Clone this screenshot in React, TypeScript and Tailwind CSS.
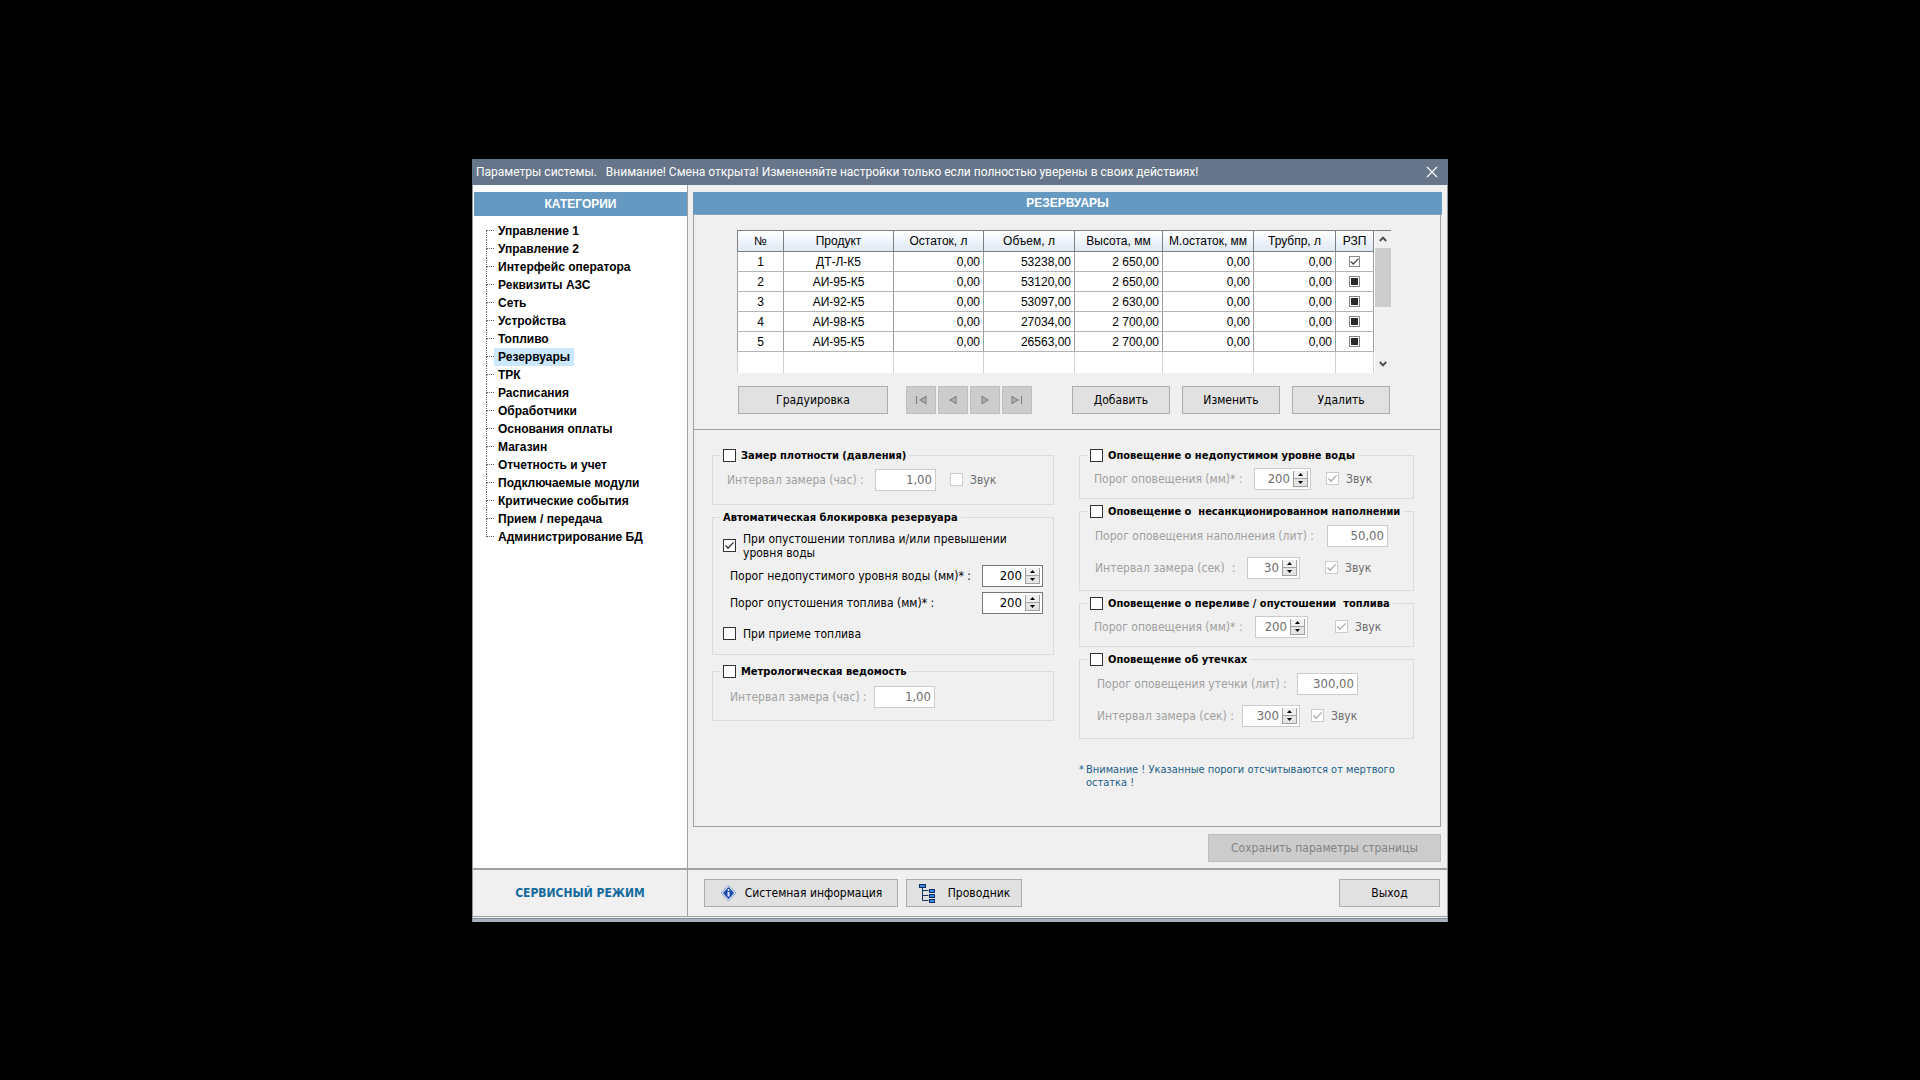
import React, { useState } from 'react';

const tahoma = "font-['DejaVu_Sans_Condensed','DejaVu_Sans',sans-serif]";
const arial = "font-['Liberation_Sans',Arial,sans-serif]";
const segoe = "font-['Roboto','Noto_Sans',sans-serif]";

const categories = [
  'Управление 1',
  'Управление 2',
  'Интерфейс оператора',
  'Реквизиты АЗС',
  'Сеть',
  'Устройства',
  'Топливо',
  'Резервуары',
  'ТРК',
  'Расписания',
  'Обработчики',
  'Основания оплаты',
  'Магазин',
  'Отчетность и учет',
  'Подключаемые модули',
  'Критические события',
  'Прием / передача',
  'Администрирование БД',
];

const columns = ['№', 'Продукт', 'Остаток, л', 'Объем, л', 'Высота, мм', 'М.остаток, мм', 'Трубпр, л', 'РЗП'];

const tanks = [
  { id: 1, product: 'ДТ-Л-К5', rest: '0,00', volume: '53238,00', height: '2 650,00', dead: '0,00', pipe: '0,00', rzp: true },
  { id: 2, product: 'АИ-95-К5', rest: '0,00', volume: '53120,00', height: '2 650,00', dead: '0,00', pipe: '0,00', rzp: false },
  { id: 3, product: 'АИ-92-К5', rest: '0,00', volume: '53097,00', height: '2 630,00', dead: '0,00', pipe: '0,00', rzp: false },
  { id: 4, product: 'АИ-98-К5', rest: '0,00', volume: '27034,00', height: '2 700,00', dead: '0,00', pipe: '0,00', rzp: false },
  { id: 5, product: 'АИ-95-К5', rest: '0,00', volume: '26563,00', height: '2 700,00', dead: '0,00', pipe: '0,00', rzp: false },
];

interface CheckProps {
  id: string;
  checked?: boolean;
  disabled?: boolean;
}

function Check({ id, checked = false, disabled = false }: CheckProps) {
  return (
    <span className="relative block size-[13px] shrink-0">
      <input
        id={id}
        type="checkbox"
        defaultChecked={checked}
        disabled={disabled}
        className="peer block size-[13px] appearance-none border border-[#333] bg-white disabled:border-[#ccc]"
      />
      <svg
        viewBox="0 0 13 13"
        className="pointer-events-none absolute inset-0 hidden size-[13px] text-[#333] peer-checked:block peer-disabled:text-[#aaa]"
        fill="none"
        stroke="currentColor"
        strokeWidth={1.3}
      >
        <path d="M2.5 6.5 5 9.2 10.6 3.4" />
      </svg>
    </span>
  );
}

function GridCheck({ id, checked, label }: { id: string; checked: boolean; label: string }) {
  return (
    <span className="relative mx-auto block size-[11px]">
      <input
        id={id}
        type="checkbox"
        aria-label={label}
        defaultChecked={checked}
        className="peer block size-[11px] appearance-none border border-[#888] bg-white"
      />
      <svg viewBox="0 0 11 11" className="pointer-events-none absolute inset-0 size-[11px] peer-checked:hidden">
        <rect x="2" y="2" width="7" height="7" fill="#2b2b2b" />
      </svg>
      <svg viewBox="0 0 11 11" className="pointer-events-none absolute inset-0 hidden size-[11px] peer-checked:block" fill="none" stroke="#444" strokeWidth={1.3}>
        <path d="M1.8 5.4 4.2 8 9.4 2.6" />
      </svg>
    </span>
  );
}

interface FieldProps {
  id: string;
  value: string;
  width: string;
  disabled?: boolean;
  spin?: boolean;
}

function Field({ id, value, width, disabled = false, spin = false }: FieldProps) {
  return (
    <span className={`flex h-[22px] shrink-0 items-center border bg-white ${width} ${disabled ? 'border-[#ccc]' : 'border-[#777]'}`}>
      <input
        id={id}
        type="text"
        defaultValue={value}
        disabled={disabled}
        className={`h-full w-full min-w-0 bg-transparent pr-[3px] text-right text-[13px] text-black outline-none disabled:text-[#6d6d6d] ${tahoma}`}
      />
      {spin && (
        <span className="mr-[2px] flex w-[15px] shrink-0 flex-col">
          <button
            type="button"
            aria-label="Увеличить"
            disabled={disabled}
            className="flex h-2 items-center justify-center border-r border-b border-l border-[#a0a0a0] bg-[#f0f0f0]"
          >
            <svg width="5" height="3" viewBox="0 0 5 3"><path d="M0 3 2.5 0 5 3z" fill="#000" /></svg>
          </button>
          <button
            type="button"
            aria-label="Уменьшить"
            disabled={disabled}
            className="flex h-2 items-center justify-center border-r border-b border-l border-[#a0a0a0] bg-[#e4e4e4]"
          >
            <svg width="5" height="3" viewBox="0 0 5 3"><path d="M0 0 2.5 3 5 0z" fill="#000" /></svg>
          </button>
        </span>
      )}
    </span>
  );
}

interface GroupProps {
  id: string;
  title: string;
  plain?: boolean;
  className?: string;
  children: React.ReactNode;
}

function Group({ id, title, plain = false, className = '', children }: GroupProps) {
  return (
    <fieldset className={`min-w-0 border border-[#dcdcdc] ${className}`}>
      <legend className={`ml-[7px] flex h-4 items-center gap-[5px] px-[3px] text-[11px] font-bold whitespace-pre text-black ${tahoma}`}>
        {!plain && <Check id={id} />}
        {plain ? title : <label htmlFor={id}>{title}</label>}
      </legend>
      {children}
    </fieldset>
  );
}

function Sound({ id, checked = true }: { id: string; checked?: boolean }) {
  return (
    <span className="flex items-center gap-[7px]">
      <Check id={id} checked={checked} disabled />
      <label htmlFor={id} className="text-[#6d6d6d]">Звук</label>
    </span>
  );
}

const button = 'flex h-7 items-center justify-center border border-[#adadad] bg-[#e1e1e1] text-[12px] text-black';
const navButton = 'flex h-7 w-[30px] items-center justify-center border border-[#bfbfbf] bg-[#ccc]';

const navIcons = [
  { label: 'Первая запись', d: 'M1.5 2v8M11 2.5 5 6l6 3.5z' },
  { label: 'Предыдущая запись', d: 'M9 2.5 3 6l6 3.5z' },
  { label: 'Следующая запись', d: 'M3 2.5 9 6l-6 3.5z' },
  { label: 'Последняя запись', d: 'M1 2.5 7 6l-6 3.5zM10.5 2v8' },
];

function InfoIcon() {
  return (
    <svg width="17" height="18" viewBox="0 0 17 18">
      <path d="M8.5 1 16 9l-7.5 8L1 9z" fill="#d3dff0" stroke="#8fa9d2" strokeLinejoin="round" />
      <path d="M8.5 3.5 13.5 9l-5 5.5L3.5 9z" fill="#1d49ad" stroke="#1d49ad" strokeLinejoin="round" />
      <circle cx="8.5" cy="6" r="1" fill="#fff" />
      <path d="M7.5 8h2v4.5h-2z" fill="#dfe9fb" />
    </svg>
  );
}

function TreeIcon() {
  return (
    <svg width="18" height="20" viewBox="0 0 18 20">
      <path d="M4.5 4v13.5h6M4.5 7.5h6M4.5 12.5h6" fill="none" stroke="#16365f" />
      <g fill="#3f86e8" stroke="#0e2c66">
        <rect x="1.5" y="1.5" width="6" height="3" />
        <rect x="11.5" y="6.5" width="5" height="3" />
        <rect x="11.5" y="11.5" width="5" height="3" />
        <rect x="11.5" y="16.5" width="5" height="3" />
      </g>
    </svg>
  );
}

export default function App() {
  const [selected, setSelected] = useState('Резервуары');

  return (
    <div className={`flex min-h-screen items-center justify-center bg-black text-[12px] leading-[14px] ${tahoma}`}>
      <div className="w-full max-w-[976px] border-x border-[#8f959c] bg-[#f0f0f0]">
        <header className={`-mx-px flex h-[26px] items-center justify-between bg-[#667589] pr-2 pl-1 text-white ${segoe}`}>
          <h1 className="whitespace-pre">
            {'Параметры системы.   Внимание! Смена открыта! Измененяйте настройки только если полностью уверены в своих действиях!'}
          </h1>
          <button type="button" aria-label="Закрыть" className="flex size-4 items-center justify-center">
            <svg width="12" height="12" viewBox="0 0 12 12" stroke="#fff" strokeWidth={1.2}>
              <path d="M1 1 11 11M11 1 1 11" />
            </svg>
          </button>
        </header>

        <div className="flex">
          <aside className="w-[215px] shrink-0 border-r border-[#a0a0a0] bg-white pt-[7px] pl-px">
            <h2 className={`flex h-6 items-center justify-center bg-[#6699c2] font-bold text-white ${arial}`}>КАТЕГОРИИ</h2>
            <ul className={`mt-[6px] ml-3 font-bold text-black ${arial}`}>
              {categories.map((name) => (
                <li key={name} className="group flex h-[18px]">
                  <span className="flex w-2 flex-col">
                    <span className="h-[9px] border-b border-l border-dotted border-[#606060] group-first:border-l-transparent" />
                    <span className="h-[9px] border-l border-dotted border-[#606060] group-last:border-l-transparent" />
                  </span>
                  <button
                    type="button"
                    onClick={() => setSelected(name)}
                    className={`px-1 text-left ${selected === name ? 'bg-[#cce8ff]' : ''}`}
                  >
                    {name}
                  </button>
                </li>
              ))}
            </ul>
          </aside>

          <main className="flex min-w-0 grow flex-col pt-[7px] pr-[5px] pb-[6px] pl-[5px]">
            <h2 className={`flex h-[23px] items-center justify-center border-b border-[#8aa4bb] bg-[#6699c2] font-bold text-white ${arial}`}>
              РЕЗЕРВУАРЫ
            </h2>
            <div className="mr-px border-x border-b border-[#a0a0a0]">
              <section className="border-b border-[#a0a0a0] pt-[15px] pr-[49px] pb-[15px] pl-[43px]">
                <div className="flex h-[143px] border-t border-[#808080] bg-white">
                  <table className={`h-full grow table-fixed border-collapse text-black ${arial}`}>
                    <colgroup>
                      <col className="w-[46px]" />
                      <col className="w-[110px]" />
                      <col className="w-[90px]" />
                      <col className="w-[91px]" />
                      <col className="w-[88px]" />
                      <col className="w-[91px]" />
                      <col className="w-[82px]" />
                      <col className="w-[38px]" />
                    </colgroup>
                    <thead>
                      <tr className="h-[21px]">
                        {columns.map((name) => (
                          <th
                            key={name}
                            className="border-x border-b border-[#808080] bg-linear-to-b from-white to-[#dfe8f5] p-0 text-center font-normal whitespace-nowrap"
                          >
                            {name}
                          </th>
                        ))}
                      </tr>
                    </thead>
                    <tbody>
                      {tanks.map((tank) => (
                        <tr key={tank.id} className="h-5 text-right *:border *:border-[#b4b4b4] *:border-x-[#a0a0a0] *:px-[3px] *:py-0">
                          <td className="text-center">{tank.id}</td>
                          <td className="text-center">{tank.product}</td>
                          <td>{tank.rest}</td>
                          <td>{tank.volume}</td>
                          <td>{tank.height}</td>
                          <td>{tank.dead}</td>
                          <td>{tank.pipe}</td>
                          <td>
                            <GridCheck id={`rzp-${tank.id}`} checked={tank.rzp} label={`РЗП ${tank.id}`} />
                          </td>
                        </tr>
                      ))}
                      <tr>
                        {columns.map((name) => (
                          <td key={name} className="border-x border-[#d0d0d0]" />
                        ))}
                      </tr>
                    </tbody>
                  </table>
                  <div className="ml-px flex w-4 shrink-0 flex-col bg-[#f0f0f0]">
                    <button type="button" aria-label="Вверх" className="flex h-[17px] items-center justify-center">
                      <svg width="8" height="6" viewBox="0 0 8 6" fill="none" stroke="#505050" strokeWidth={2}><path d="M.8 5 4 1.6 7.2 5" /></svg>
                    </button>
                    <div className="h-[59px] bg-[#cdcdcd]" />
                    <button type="button" aria-label="Вниз" className="mt-auto flex h-[17px] items-center justify-center">
                      <svg width="8" height="6" viewBox="0 0 8 6" fill="none" stroke="#505050" strokeWidth={2}><path d="M.8 1 4 4.4 7.2 1" /></svg>
                    </button>
                  </div>
                </div>

                <div className="mt-[13px] flex items-center justify-between pr-px pl-px">
                  <div className="flex">
                    <button type="button" className={`w-[150px] ${button}`}>Градуировка</button>
                    <div className="ml-[18px] flex gap-[2px]">
                      {navIcons.map((icon) => (
                        <button key={icon.label} type="button" disabled aria-label={icon.label} className={navButton}>
                          <svg width="12" height="12" viewBox="0 0 12 12" fill="#b0b0b0" stroke="#858585" strokeWidth={1.2}>
                            <path d={icon.d} />
                          </svg>
                        </button>
                      ))}
                    </div>
                  </div>
                  <div className="flex gap-3">
                    <button type="button" className={`w-[98px] ${button}`}>Добавить</button>
                    <button type="button" className={`w-[98px] ${button}`}>Изменить</button>
                    <button type="button" className={`w-[98px] ${button}`}>Удалить</button>
                  </div>
                </div>
              </section>

              <section className="flex pt-[18px] pr-[26px] pb-[37px] pl-[18px] whitespace-nowrap text-black">
                <div className="w-[342px] shrink-0">
                  <Group id="density" title="Замер плотности (давления)" className="h-[57px]">
                    <div className="flex items-center pt-[5px] pl-[14px]">
                      <label htmlFor="density-interval" className="w-[148px] text-[#a0a0a0]">Интервал замера (час) :</label>
                      <Field id="density-interval" value="1,00" width="mr-[14px] w-[61px]" disabled />
                      <Sound id="density-sound" checked={false} />
                    </div>
                  </Group>

                  <Group id="lock" title="Автоматическая блокировка резервуара" plain className="mt-[5px] h-[145px]">
                    <div className="flex items-center gap-[7px] pt-[6px] pl-[10px]">
                      <Check id="lock-empty" checked />
                      <label htmlFor="lock-empty">
                        При опустошении топлива и/или превышении
                        <br />
                        уровня воды
                      </label>
                    </div>
                    <div className="mt-[5px] flex items-center pl-[17px]">
                      <label htmlFor="lock-water" className="w-[252px]">Порог недопустимого уровня воды (мм)* :</label>
                      <Field id="lock-water" value="200" width="w-[61px]" spin />
                    </div>
                    <div className="mt-[5px] flex items-center pl-[17px]">
                      <label htmlFor="lock-fuel" className="w-[252px]">Порог опустошения топлива (мм)* :</label>
                      <Field id="lock-fuel" value="200" width="w-[61px]" spin />
                    </div>
                    <div className="mt-[13px] flex items-center gap-[7px] pl-[10px]">
                      <Check id="lock-receive" />
                      <label htmlFor="lock-receive">При приеме топлива</label>
                    </div>
                  </Group>

                  <Group id="metrology" title="Метрологическая ведомость" className="mt-[9px] h-[57px]">
                    <div className="flex items-center pt-[6px] pl-[17px]">
                      <label htmlFor="metrology-interval" className="w-[144px] text-[#a0a0a0]">Интервал замера (час) :</label>
                      <Field id="metrology-interval" value="1,00" width="w-[61px]" disabled />
                    </div>
                  </Group>
                </div>

                <div className="ml-[25px] flex min-w-0 grow flex-col gap-[5px]">
                  <Group id="water" title="Оповещение о недопустимом уровне воды" className="h-[51px]">
                    <div className="flex items-center pt-1 pl-[14px]">
                      <label htmlFor="water-level" className="w-[160px] text-[#a0a0a0]">Порог оповещения (мм)* :</label>
                      <Field id="water-level" value="200" width="mr-[15px] w-[57px]" disabled spin />
                      <Sound id="water-sound" />
                    </div>
                  </Group>

                  <Group id="filling" title="Оповещение о  несанкционированном наполнении" className="h-[87px]">
                    <div className="flex items-center pt-[5px] pl-[15px]">
                      <label htmlFor="filling-level" className="w-[232px] text-[#a0a0a0]">Порог оповещения наполнения (лит) :</label>
                      <Field id="filling-level" value="50,00" width="w-[61px]" disabled />
                    </div>
                    <div className="mt-[10px] flex items-center pl-[15px]">
                      <label htmlFor="filling-interval" className="w-[152px] whitespace-pre text-[#a0a0a0]">{'Интервал замера (сек)  :'}</label>
                      <Field id="filling-interval" value="30" width="mr-[25px] w-[53px]" disabled spin />
                      <Sound id="filling-sound" />
                    </div>
                  </Group>

                  <Group id="overflow" title="Оповещение о переливе / опустошении  топлива" className="h-[51px]">
                    <div className="flex items-center pt-1 pl-[14px]">
                      <label htmlFor="overflow-level" className="w-[161px] text-[#a0a0a0]">Порог оповещения (мм)* :</label>
                      <Field id="overflow-level" value="200" width="mr-[27px] w-[53px]" disabled spin />
                      <Sound id="overflow-sound" />
                    </div>
                  </Group>

                  <Group id="leak" title="Оповещение об утечках" className="h-[87px]">
                    <div className="flex items-center pt-[5px] pl-[17px]">
                      <label htmlFor="leak-level" className="w-[200px] text-[#a0a0a0]">Порог оповещения утечки (лит) :</label>
                      <Field id="leak-level" value="300,00" width="w-[61px]" disabled />
                    </div>
                    <div className="mt-[10px] flex items-center pl-[17px]">
                      <label htmlFor="leak-interval" className="w-[145px] text-[#a0a0a0]">Интервал замера (сек) :</label>
                      <Field id="leak-interval" value="300" width="mr-[11px] w-[58px]" disabled spin />
                      <Sound id="leak-sound" />
                    </div>
                  </Group>

                  <p className="mt-[19px] flex gap-[2px] text-[11px] leading-[13px] text-[#1b5e86]">
                    <span>*</span>
                    <span>
                      Внимание ! Указанные пороги отсчитываются от мертвого
                      <br />
                      остатка !
                    </span>
                  </p>
                </div>
              </section>
            </div>

            <button type="button" disabled className="mt-[7px] mr-px flex h-7 w-[233px] items-center justify-center self-end border border-[#bfbfbf] bg-[#ccc] text-[#838383]">
              Сохранить параметры страницы
            </button>
          </main>
        </div>

        <footer className="flex h-[49px] border-t-2 border-b border-[#a0a0a0]">
          <div className={`flex w-[215px] shrink-0 items-center justify-center border-r border-[#a0a0a0] text-[12px] font-bold text-[#136a9c] ${tahoma}`}>
            СЕРВИСНЫЙ РЕЖИМ
          </div>
          <div className="flex grow items-center pr-[7px] pl-4">
            <button type="button" className={`w-[194px] gap-2 ${button}`}>
              <InfoIcon />
              Системная информация
            </button>
            <button type="button" className={`ml-2 w-[116px] gap-3 ${button}`}>
              <TreeIcon />
              Проводник
            </button>
            <button type="button" className={`ml-auto w-[101px] ${button}`}>Выход</button>
          </div>
        </footer>
        <div className="mt-px h-1 border-t border-[#808890] bg-[#aab4be]" />
      </div>
    </div>
  );
}
